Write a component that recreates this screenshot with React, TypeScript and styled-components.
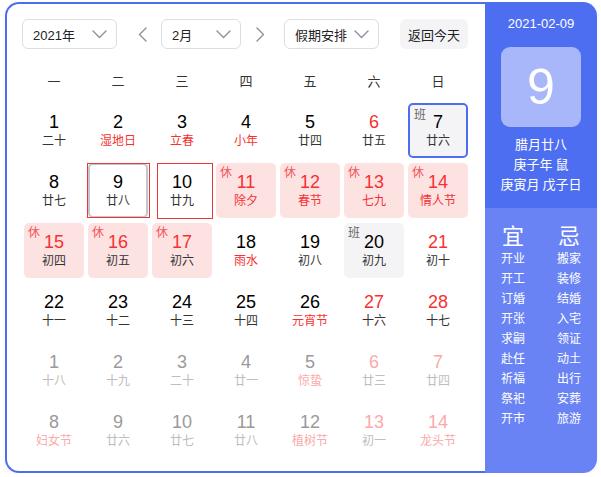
import React from 'react';
import styled, { createGlobalStyle, css } from 'styled-components';

const GlobalStyle = createGlobalStyle`
  body {
    margin: 0;
    background: #fff;
    font-family: 'Liberation Sans', 'Noto Sans CJK SC', sans-serif;
  }
`;

type Badge = '休' | '班' | null;

interface DayCell {
  day: number;
  lunar: string;
  next?: boolean;
  redNum?: boolean;
  redLunar?: boolean;
  badge?: Badge;
  mark?: 'today' | 'selected' | 'focus';
}

const weekdays = ['一', '二', '三', '四', '五', '六', '日'];

const days: DayCell[] = [
  { day: 1, lunar: '二十' },
  { day: 2, lunar: '湿地日', redLunar: true },
  { day: 3, lunar: '立春', redLunar: true },
  { day: 4, lunar: '小年', redLunar: true },
  { day: 5, lunar: '廿四' },
  { day: 6, lunar: '廿五', redNum: true },
  { day: 7, lunar: '廿六', badge: '班', mark: 'today' },

  { day: 8, lunar: '廿七' },
  { day: 9, lunar: '廿八', mark: 'selected' },
  { day: 10, lunar: '廿九', mark: 'focus' },
  { day: 11, lunar: '除夕', redNum: true, redLunar: true, badge: '休' },
  { day: 12, lunar: '春节', redNum: true, redLunar: true, badge: '休' },
  { day: 13, lunar: '七九', redNum: true, redLunar: true, badge: '休' },
  { day: 14, lunar: '情人节', redNum: true, redLunar: true, badge: '休' },

  { day: 15, lunar: '初四', redNum: true, badge: '休' },
  { day: 16, lunar: '初五', redNum: true, badge: '休' },
  { day: 17, lunar: '初六', redNum: true, badge: '休' },
  { day: 18, lunar: '雨水', redLunar: true },
  { day: 19, lunar: '初八' },
  { day: 20, lunar: '初九', badge: '班' },
  { day: 21, lunar: '初十', redNum: true },

  { day: 22, lunar: '十一' },
  { day: 23, lunar: '十二' },
  { day: 24, lunar: '十三' },
  { day: 25, lunar: '十四' },
  { day: 26, lunar: '元宵节', redLunar: true },
  { day: 27, lunar: '十六', redNum: true },
  { day: 28, lunar: '十七', redNum: true },

  { day: 1, lunar: '十八', next: true },
  { day: 2, lunar: '十九', next: true },
  { day: 3, lunar: '二十', next: true },
  { day: 4, lunar: '廿一', next: true },
  { day: 5, lunar: '惊蛰', next: true, redLunar: true },
  { day: 6, lunar: '廿三', next: true, redNum: true },
  { day: 7, lunar: '廿四', next: true, redNum: true },

  { day: 8, lunar: '妇女节', next: true, redLunar: true },
  { day: 9, lunar: '廿六', next: true },
  { day: 10, lunar: '廿七', next: true },
  { day: 11, lunar: '廿八', next: true },
  { day: 12, lunar: '植树节', next: true, redLunar: true },
  { day: 13, lunar: '初一', next: true, redNum: true },
  { day: 14, lunar: '龙头节', next: true, redNum: true, redLunar: true },
];

const yi = ['开业', '开工', '订婚', '开张', '求嗣', '赴任', '祈福', '祭祀', '开市'];
const ji = ['搬家', '装修', '结婚', '入宅', '领证', '动土', '出行', '安葬', '旅游'];

const Wrapper = styled.div`
  display: flex;
  width: 592px;
  height: 471px;
  margin: 2px 0 0 5px;
  border-radius: 14px;
  box-shadow: 0 2px 4px rgba(0, 0, 0, 0.06);
`;

const Main = styled.div`
  width: 480px;
  box-sizing: border-box;
  border: 2px solid #4e6ef2;
  border-right: none;
  border-radius: 14px 0 0 14px;
  background: #fff;
`;

const Header = styled.div`
  display: flex;
  align-items: center;
  padding: 15px 17px 0 15px;
`;

const Select = styled.div<{ w: number }>`
  display: flex;
  align-items: center;
  justify-content: space-between;
  box-sizing: border-box;
  width: ${({ w }) => w}px;
  height: 30px;
  padding: 0 9px 0 10px;
  border: 1px solid #dcdee3;
  border-radius: 6px;
  font-size: 13px;
  color: #222;
`;

const ArrowButton = styled.div<{ side: 'left' | 'right' }>`
  display: flex;
  align-items: center;
  justify-content: center;
  width: 22px;
  height: 30px;
  margin: ${({ side }) => (side === 'left' ? '0 8px 0 14px' : '0 13px 0 8px')};
`;

const TodayButton = styled.div`
  margin-left: auto;
  height: 30px;
  width: 68px;
  display: flex;
  align-items: center;
  justify-content: center;
  background: #f4f4f6;
  border-radius: 6px;
  font-size: 13px;
  color: #222;
`;

const Grid = styled.div`
  display: grid;
  grid-template-columns: repeat(7, 60px);
  column-gap: 4px;
  padding: 0 17px;
`;

const WeekRow = styled(Grid)`
  margin-top: 16px;
  height: 30px;
  align-items: center;
`;

const WeekDay = styled.div`
  text-align: center;
  font-size: 13px;
  color: #333;
`;

const DayGrid = styled(Grid)`
  margin-top: 8px;
  row-gap: 5px;
`;

const Cell = styled.div<{ badge: Badge; mark?: string }>`
  position: relative;
  box-sizing: border-box;
  height: 55px;
  padding-top: 9px;
  border-radius: 5px;
  text-align: center;
  background: ${({ badge }) => (badge === '休' ? '#fde2e2' : badge === '班' ? '#f4f4f6' : 'transparent')};
  ${({ mark }) =>
    mark === 'today' &&
    css`
      border: 2px solid #4e6ef2;
      padding-top: 7px;
    `}
  ${({ mark }) =>
    mark === 'selected' &&
    css`
      border: 2px solid #c3c6cd;
      padding-top: 7px;
    `}
`;

const Outline = styled.div<{ l: number; r: number; t: number; b: number }>`
  position: absolute;
  left: ${({ l }) => l}px;
  right: ${({ r }) => r}px;
  top: ${({ t }) => t}px;
  bottom: ${({ b }) => b}px;
  border: 1px solid #e8373a;
  pointer-events: none;
`;

const BadgeMark = styled.span<{ kind: Badge }>`
  position: absolute;
  left: 4px;
  top: 1px;
  font-size: 12px;
  line-height: 16px;
  font-family: 'Noto Sans CJK SC', sans-serif;
  color: ${({ kind }) => (kind === '休' ? '#f5535a' : '#666')};
`;

const Num = styled.div<{ red?: boolean; next?: boolean }>`
  font-size: 18px;
  line-height: 20px;
  color: ${({ red, next }) => (next ? (red ? '#fbaaaa' : '#9a9a9a') : red ? '#f73131' : '#000')};
`;

const Lunar = styled.div<{ red?: boolean; next?: boolean }>`
  font-size: 12px;
  line-height: 16px;
  font-family: 'Noto Sans CJK SC', sans-serif;
  color: ${({ red, next }) => (next ? (red ? '#fbaaaa' : '#bdbdbd') : red ? '#f73131' : '#333')};
`;

const Panel = styled.div`
  width: 112px;
  display: flex;
  flex-direction: column;
  border-radius: 0 14px 14px 0;
  overflow: hidden;
  color: #fff;
  font-family: 'Noto Sans CJK SC', sans-serif;
`;

const PanelTop = styled.div`
  height: 206px;
  background: #4e6ef2;
  display: flex;
  flex-direction: column;
  align-items: center;
  padding-top: 12px;
  box-sizing: border-box;
`;

const DateText = styled.div`
  font-family: 'Liberation Sans', sans-serif;
  font-size: 13px;
  line-height: 20px;
`;

const BigDay = styled.div`
  margin-top: 13px;
  width: 80px;
  height: 80px;
  border-radius: 9px;
  background: rgba(255, 255, 255, 0.5);
  display: flex;
  align-items: center;
  justify-content: center;
  font-family: 'Liberation Sans', sans-serif;
  font-size: 50px;
`;

const InfoLines = styled.div`
  margin-top: 7px;
  font-size: 13px;
  line-height: 20px;
  text-align: center;
`;

const PanelBottom = styled.div`
  flex: 1;
  background: #6a83f4;
  display: grid;
  grid-template-columns: 56px 56px;
  align-content: start;
  padding-top: 13px;
`;

const Column = styled.div`
  display: flex;
  flex-direction: column;
  align-items: center;
`;

const BigWord = styled.div`
  font-size: 22px;
  line-height: 27px;
`;

const Item = styled.div`
  font-size: 12px;
  line-height: 20px;
`;

const ChevronDown = () => (
  <svg width="15" height="9" viewBox="0 0 15 9" fill="none">
    <path d="M1 1l6.5 6.5L14 1" stroke="#8c909c" strokeWidth="1.4" strokeLinecap="round" strokeLinejoin="round" />
  </svg>
);

const Arrow = ({ dir }: { dir: 'left' | 'right' }) => (
  <svg width="9" height="15" viewBox="0 0 9 15" fill="none">
    <path
      d={dir === 'left' ? 'M8 1L1.5 7.5 8 14' : 'M1 1l6.5 6.5L1 14'}
      stroke="#8c909c"
      strokeWidth="1.4"
      strokeLinecap="round"
      strokeLinejoin="round"
    />
  </svg>
);

const App: React.FC = () => {
  return (
    <>
      <GlobalStyle />
      <Wrapper>
        <Main>
          <Header>
            <Select w={95}>
              2021年
              <ChevronDown />
            </Select>
            <ArrowButton side="left">
              <Arrow dir="left" />
            </ArrowButton>
            <Select w={80}>
              2月
              <ChevronDown />
            </Select>
            <ArrowButton side="right">
              <Arrow dir="right" />
            </ArrowButton>
            <Select w={95}>
              假期安排
              <ChevronDown />
            </Select>
            <TodayButton>返回今天</TodayButton>
          </Header>

          <WeekRow>
            {weekdays.map((w) => (
              <WeekDay key={w}>{w}</WeekDay>
            ))}
          </WeekRow>

          <DayGrid>
            {days.map((d, i) => (
              <Cell key={i} badge={d.badge ?? null} mark={d.mark}>
                {d.badge && <BadgeMark kind={d.badge}>{d.badge}</BadgeMark>}
                {d.mark === 'selected' && <Outline l={-3} r={-4} t={-2} b={-2} />}
                {d.mark === 'focus' && <Outline l={5} r={-1} t={0} b={-1} />}
                <Num red={d.redNum} next={d.next}>{d.day}</Num>
                <Lunar red={d.redLunar} next={d.next}>{d.lunar}</Lunar>
              </Cell>
            ))}
          </DayGrid>
        </Main>

        <Panel>
          <PanelTop>
            <DateText>2021-02-09</DateText>
            <BigDay>9</BigDay>
            <InfoLines>
              <div>腊月廿八</div>
              <div>庚子年 鼠</div>
              <div>庚寅月 戊子日</div>
            </InfoLines>
          </PanelTop>
          <PanelBottom>
            <Column>
              <BigWord>宜</BigWord>
              {yi.map((t) => (
                <Item key={t}>{t}</Item>
              ))}
            </Column>
            <Column>
              <BigWord>忌</BigWord>
              {ji.map((t) => (
                <Item key={t}>{t}</Item>
              ))}
            </Column>
          </PanelBottom>
        </Panel>
      </Wrapper>
    </>
  );
};

export default App;
